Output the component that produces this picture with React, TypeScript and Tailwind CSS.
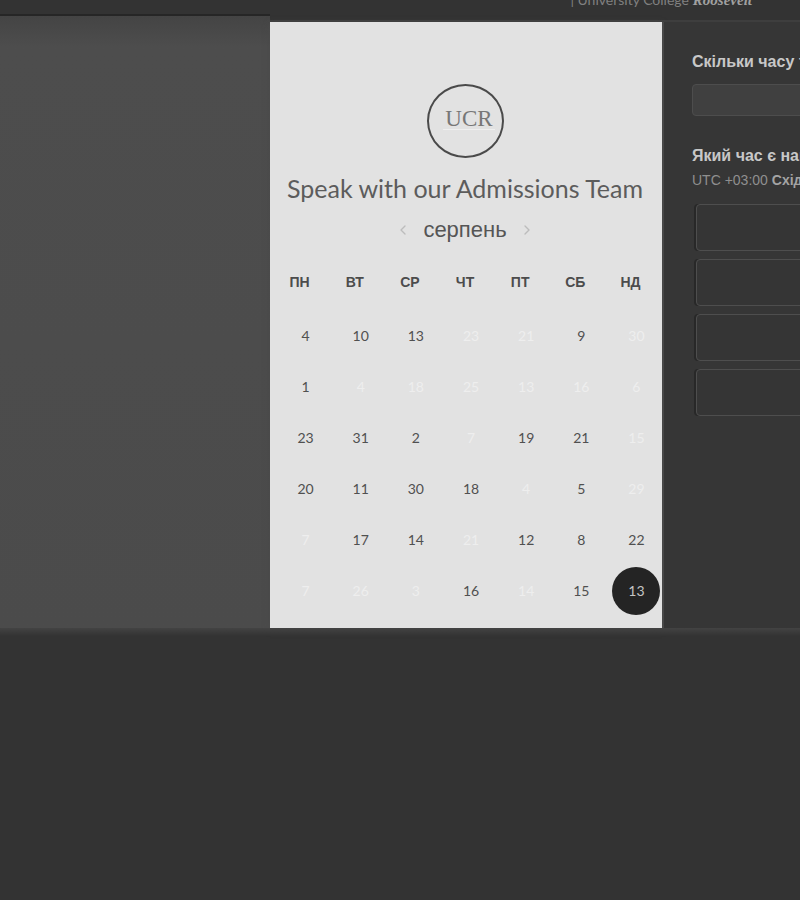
import React from 'react';
import { ChevronLeft, ChevronRight } from 'lucide-react';

const weekdays = ['ПН', 'ВТ', 'СР', 'ЧТ', 'ПТ', 'СБ', 'НД'];

type Day = { n: number; off?: boolean; selected?: boolean };

const on = (n: number): Day => ({ n });
const off = (n: number): Day => ({ n, off: true });

const weeks: Day[][] = [
  [on(4), on(10), on(13), off(23), off(21), on(9), off(30)],
  [on(1), off(4), off(18), off(25), off(13), off(16), off(6)],
  [on(23), on(31), on(2), off(7), on(19), on(21), off(15)],
  [on(20), on(11), on(30), on(18), off(4), on(5), off(29)],
  [off(7), on(17), on(14), off(21), on(12), on(8), on(22)],
  [off(7), off(26), off(3), on(16), off(14), on(15), { n: 13, selected: true }],
];

const slots = [1, 2, 3, 4];

function dayClass(day: Day) {
  if (day.selected) return 'bg-[#242424] text-[#c4c4c4]';
  if (day.off) return 'text-[#eeeeee]';
  return 'text-[#505050]';
}

function Logo() {
  return (
    <div className="flex h-[74px] w-[77px] items-center justify-center rounded-[50%] border-2 border-[#4a4a4a]">
      <div className="flex flex-col items-center pb-1 pl-2">
        <span className="font-['Liberation_Serif',serif] text-[23px] leading-5 text-[#777777]">UCR</span>
        <span className="h-px w-13 bg-[#efefef]" />
      </div>
    </div>
  );
}

function Calendar() {
  return (
    <table className="w-full table-fixed border-collapse">
      <thead>
        <tr className="h-14">
          {weekdays.map((d) => (
            <th key={d} scope="col" className="p-0 text-center font-['Liberation_Sans',sans-serif] text-sm font-bold text-[#4c4c4c]">
              {d}
            </th>
          ))}
        </tr>
      </thead>
      <tbody>
        {weeks.map((week, i) => (
          <tr key={i} className="h-[51px]">
            {week.map((day, j) => (
              <td key={j} className="p-0 pl-3">
                <div className="flex justify-center">
                  <button
                    type="button"
                    disabled={day.off}
                    className={`size-12 shrink-0 rounded-full text-sm ${dayClass(day)}`}
                  >
                    {day.n}
                  </button>
                </div>
              </td>
            ))}
          </tr>
        ))}
      </tbody>
    </table>
  );
}

export default function App() {
  return (
    <div className="flex min-h-screen flex-col overflow-hidden bg-[#333333] font-['Lato',sans-serif]">
      <header className="flex h-[22px] justify-end overflow-hidden border-b-2 border-[#3e3e3e] pr-12">
        <p className="-mt-2 flex gap-1 whitespace-nowrap text-sm leading-4 text-[#808080]">
          <span>| University College</span>
          <span className="font-['Liberation_Serif',serif] text-[15px] leading-4 font-bold italic text-[#a0a0a0]">Roosevelt</span>
        </p>
      </header>

      <main className="grid grid-cols-[minmax(0,1fr)_392px_138px]">
        <div className="-mt-2 border-t-2 border-[#262626] bg-linear-to-b from-[#444444] via-[#4d4d4d] via-5% to-[#4b4b4b]" />

        <section className="flex flex-col items-center bg-[#e2e2e2] pt-[62px] pr-1 pb-3 pl-0.5 shadow-[0_2px_6px_#4a4a4a]">
          <Logo />
          <h1 className="mt-3 text-[25px] leading-9 whitespace-nowrap text-[#5c5c5c]">Speak with our Admissions Team</h1>
          <div className="mt-2 flex items-center justify-center gap-3">
            <button type="button" aria-label="Попередній місяць" className="text-[#bcbcbc]">
              <ChevronLeft size={16} />
            </button>
            <h2 className="font-['Liberation_Sans',sans-serif] text-[22px] leading-8 text-[#555555]">серпень</h2>
            <button type="button" aria-label="Наступний місяць" className="text-[#bcbcbc]">
              <ChevronRight size={16} />
            </button>
          </div>
          <div className="mt-2 w-full">
            <Calendar />
          </div>
        </section>

        <aside className="overflow-hidden border-l-2 border-[#484848] bg-[#363636] pt-[30px] pl-7 font-['Liberation_Sans',sans-serif] whitespace-nowrap">
          <label htmlFor="duration" className="block text-base leading-5 font-bold text-[#c8c8c8]">
            Скільки часу т
          </label>
          <input
            id="duration"
            type="text"
            className="mt-3 block h-8 w-40 rounded-sm border border-[#4d4d4d] bg-[#404040] px-2 text-[#c8c8c8]"
          />
          <h2 className="mt-7 text-base leading-6 font-bold text-[#c8c8c8]">Який час є най</h2>
          <p className="text-sm leading-6 text-[#8f8f8f]">
            UTC +03:00 <span className="font-bold text-[#a4a4a4]">Схід</span>
          </p>
          <div className="mt-3 flex flex-col gap-2 pl-1">
            {slots.map((s) => (
              <button
                key={s}
                type="button"
                aria-label={`Час ${s}`}
                className="h-[47px] w-40 rounded-sm border border-[#4e4e4e] bg-[#353535] shadow-[-2px_0_0_#282828]"
              />
            ))}
          </div>
        </aside>
      </main>
      <div className="h-2 bg-linear-to-b from-[#434343] to-[#333333]" />
    </div>
  );
}
